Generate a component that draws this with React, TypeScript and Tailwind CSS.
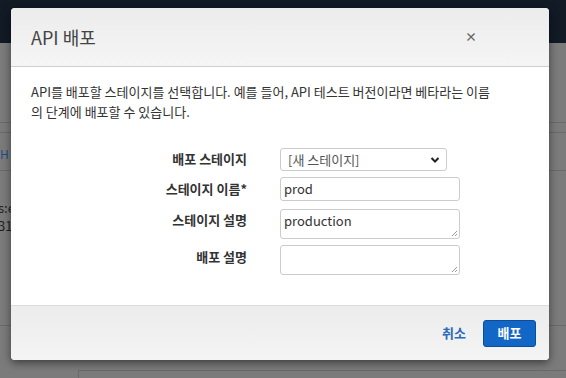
import React from 'react';

const font = { fontFamily: '"Noto Sans CJK KR", "Noto Sans", sans-serif' };

function Background() {
  return (
    <div className="absolute inset-0 flex flex-col">
      <div className="h-[43px] bg-[#121a25]" />
      <div className="flex-1 bg-[#7b7b7b] relative">
        <div className="h-[80px] border-b border-[#6a6a6a]" />
        <div className="h-[10px] border-b border-[#6a6a6a]" />
        <div className="h-[38px] border-b border-[#6a6a6a] text-[12px] text-[#1b4f8a] pt-3 pl-0">H</div>
        <div className="pt-7 text-[13px] text-[#222] leading-[18px] -ml-[2px]">
          <div>s:e</div>
          <div>31</div>
        </div>
        <div className="absolute left-0 right-0 top-[282px] border-b border-[#6a6a6a]" />
        <div className="absolute left-[78px] right-0 top-[327px] border-t border-l border-[#6a6a6a] h-[20px]" />
      </div>
    </div>
  );
}

export default function App() {
  return (
    <div className="relative w-[566px] h-[378px] overflow-hidden" style={font}>
      <Background />

      {/* Modal */}
      <div className="absolute left-[11px] top-[8px] w-[538px] bg-white rounded-[4px] shadow-[0_3px_9px_rgba(0,0,0,0.5)] overflow-hidden">
        <div className="h-[59px] bg-gradient-to-b from-[#ececec] to-[#f5f5f5] border-b border-[#cfcfcf] flex items-center justify-between pl-[20px] pr-[72px]">
          <h1 className="text-[18px] text-[#444] font-normal">API 배포</h1>
          <span className="text-[12px] text-[#666] font-bold">×</span>
        </div>

        <div className="px-[20px] pt-[15px] pb-[30px]">
          <p className="w-[465px] text-[13px] leading-[20px] text-[#333]">
            API를 배포할 스테이지를 선택합니다. 예를 들어, API 테스트 버전이라면 베타라는 이름의 단계에 배포할 수 있습니다.
          </p>

          <div className="mt-[26px] grid grid-cols-[216px_180px] gap-x-[33px] gap-y-[6px] items-center text-[13px]">
            <label className="text-right font-bold text-[#333] self-start pt-[1px]">배포 스테이지</label>
            <div className="w-[167px] h-[23px] border border-[#ccc] rounded-[3px] flex items-center justify-between pl-[7px] pr-[6px] text-[#555]">
              <span>[새 스테이지]</span>
              <svg width="10" height="8" viewBox="0 0 10 8">
                <path d="M1.5 2 L5 5.5 L8.5 2" fill="none" stroke="#222" strokeWidth="2" />
              </svg>
            </div>

            <label className="text-right font-bold text-[#333]">스테이지 이름*</label>
            <div className="h-[24px] border border-[#ccc] rounded-[3px] flex items-center px-[3px] text-[#333]">prod</div>

            <label className="text-right font-bold text-[#333] self-start pt-[1px] mt-[2px]">스테이지 설명</label>
            <div className="relative h-[30px] border border-[#ccc] rounded-[3px] px-[3px] pt-[1px] text-[#333] mt-[2px]">
              production
              <svg className="absolute right-[1px] bottom-[1px]" width="7" height="7" viewBox="0 0 7 7">
                <path d="M6 1 L1 6 M6 4 L4 6" stroke="#999" strokeWidth="1" />
              </svg>
            </div>

            <label className="text-right font-bold text-[#333] self-start pt-[2px]">배포 설명</label>
            <div className="relative h-[30px] border border-[#ccc] rounded-[3px]">
              <svg className="absolute right-[1px] bottom-[1px]" width="7" height="7" viewBox="0 0 7 7">
                <path d="M6 1 L1 6 M6 4 L4 6" stroke="#999" strokeWidth="1" />
              </svg>
            </div>
          </div>
        </div>

        <div className="h-[55px] bg-gradient-to-b from-[#ececec] to-[#f4f4f4] border-t border-[#dcdcdc] flex items-center justify-end pr-[13px] gap-[17px]">
          <span className="text-[13px] font-bold text-[#2a6ab8]">취소</span>
          <button className="w-[53px] h-[27px] rounded-[3px] bg-[#1166c6] border border-[#0b4f9c] text-white text-[13px] font-bold">배포</button>
        </div>
      </div>
    </div>
  );
}
